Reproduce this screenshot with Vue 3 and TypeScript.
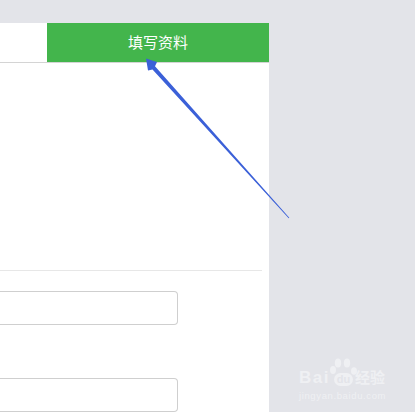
<script setup lang="ts">
const tabs: string[] = ['填写资料']
</script>

<template>
  <div class="page">
    <main class="card">
      <header class="tabs">
        <div class="tab-idle"></div>
        <div v-for="t in tabs" :key="t" class="tab-active">{{ t }}</div>
      </header>
      <section class="form">
        <hr class="rule" />
        <input class="field" type="text" />
        <input class="field second" type="text" />
      </section>
    </main>

    <svg class="arrow" width="415" height="412" viewBox="0 0 415 412">
      <path d="M146 58.5 L157 62 L155 66.200 L289.300 217.800 L288.700 218.200 L152.500 69.500 L148 70.500 Z" fill="#3b60d8" />
    </svg>

    <div class="mark">
      <svg class="paw" width="30" height="20" viewBox="0 0 30 20">
        <g fill="#eff0f3">
          <ellipse cx="4" cy="12" rx="3" ry="4" />
          <ellipse cx="9" cy="5" rx="3.200" ry="4.500" />
          <ellipse cx="18" cy="5" rx="3.200" ry="4.500" />
          <ellipse cx="25" cy="13" rx="3" ry="3.800" />
        </g>
      </svg>
      <div class="brand">
        <span class="bai">Bai</span><span class="du">du</span><span class="jy">经验</span>
      </div>
      <div class="url">jingyan.baidu.com</div>
    </div>
  </div>
</template>

<style scoped>
.page {
  position: relative;
  width: 415px;
  height: 412px;
  overflow: hidden;
  background: #e3e4e9;
  padding-top: 23px;
  box-sizing: border-box;
  font-family: "Liberation Sans", "Noto Sans CJK SC", sans-serif;
}
.card {
  width: 269px;
  height: 389px;
  background: #fff;
}
.tabs {
  display: flex;
  height: 40px;
  border-bottom: 1px solid #d4d4d4;
  box-sizing: border-box;
}
.tab-idle {
  width: 47px;
}
.tab-active {
  flex: 1;
  height: 39px;
  background: #43b54c;
  color: #fff;
  font-size: 15px;
  line-height: 39px;
  text-align: center;
}
.form {
  display: flex;
  flex-direction: column;
  padding-top: 207px;
}
.rule {
  width: 262px;
  height: 1px;
  margin: 0;
  border: 0;
  background: #e7e7e7;
}
.field {
  display: block;
  width: 178px;
  height: 34px;
  margin-top: 20px;
  margin-left: 0;
  padding: 0;
  border: 1px solid #cfcfcf;
  border-left: 0;
  border-radius: 0 4px 4px 0;
  box-sizing: border-box;
  background: #fff;
  outline: none;
}
.second {
  margin-top: 53px;
}
.arrow {
  position: absolute;
  inset: 0;
}
.mark {
  position: absolute;
  left: 299px;
  top: 358px;
  width: 90px;
  color: #eff0f3;
}
.paw {
  position: absolute;
  left: 30px;
  top: 0;
}
.brand {
  display: flex;
  align-items: center;
  margin-top: 12px;
  height: 16px;
  font-weight: 700;
  line-height: 16px;
}
.bai {
  font-size: 17px;
  letter-spacing: 1.500px;
  width: 35px;
}
.du {
  width: 19px;
  height: 13px;
  margin-top: 2px;
  background: #eff0f3;
  border-radius: 7px 7px 7px 7px;
  color: #e3e4e9;
  font-size: 11px;
  line-height: 13px;
  text-align: center;
}
.jy {
  font-size: 15px;
  font-weight: 700;
  margin-left: 2px;
  width: 30px;
  white-space: nowrap;
}
.url {
  margin-top: 4px;
  font-size: 9.500px;
  line-height: 12px;
  letter-spacing: 0.620px;
  white-space: nowrap;
}
</style>
